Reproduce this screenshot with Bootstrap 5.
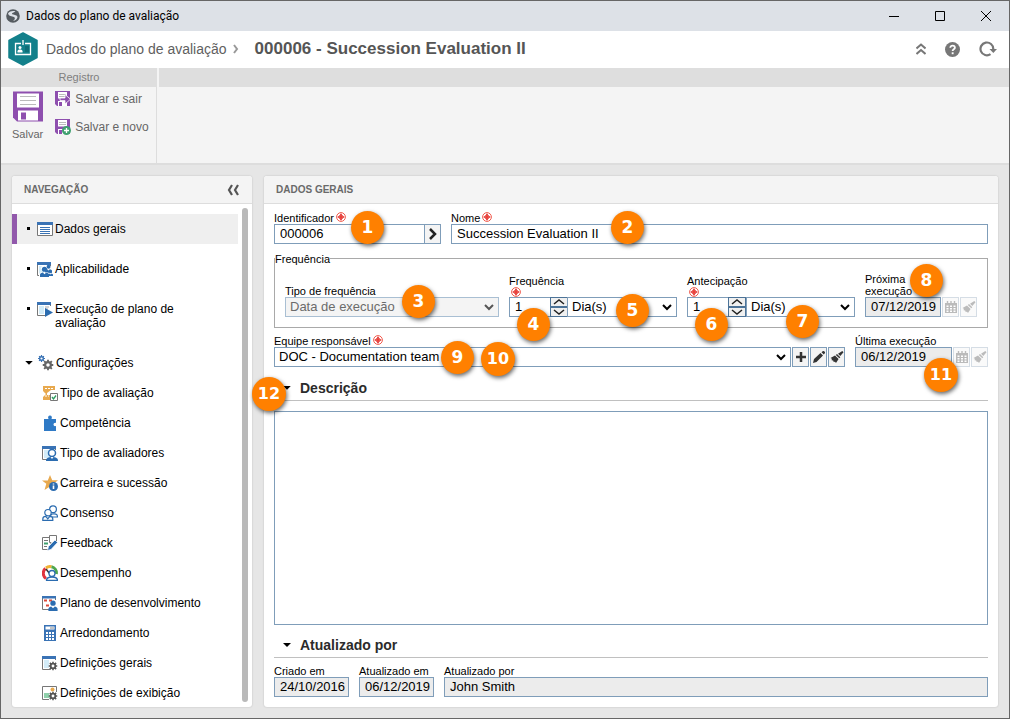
<!DOCTYPE html>
<html lang="pt-BR">
<head>
<meta charset="utf-8">
<meta name="viewport" content="width=device-width, initial-scale=1">
<title>Dados do plano de avaliação</title>
<link href="https://cdn.jsdelivr.net/npm/bootstrap@5.3.0/dist/css/bootstrap.min.css" rel="stylesheet">
<style>
  :root { --field: #7f9db9; --muted: #666; --line: #ddd; }
  body { font: 12px/14px "Liberation Sans", Arial, sans-serif; color: #000; background: #e6e6e6; }
  svg { display: block; flex: none; }
  .window { border: 1px solid #666; min-height: 700px; }
  .plain-btn { border: 0; background: none; padding: 0; color: inherit; font: inherit; }
  a { color: inherit; text-decoration: none; }

  .titlebar { height: 30px; background: #dde1e7; font: 12px/16px Roboto, "Open Sans", sans-serif; padding-left: 5px; gap: 6px; }
  .titlebar .plain-btn { width: 46px; height: 30px; margin-left: -6px; }
  .crumbs { height: 37px; background: #fff; padding: 0 12px 0 7px; color: #5f5f5f; font-size: 14px; }
  .crumbs h1 { font-size: 17px; line-height: 20px; font-weight: 700; margin: 0; color: #555; }
  .crumb-tools { gap: 19px; }

  .ribbon-heads { height: 19px; background: #dedede; color: #808080; font-size: 11px; line-height: 19px; }
  .ribbon-heads div { width: 158px; border-right: 2px solid #f4f4f4; }
  .ribbon-body { height: 78px; background: #f4f4f4; border-bottom: 2px solid var(--line); color: var(--muted); }
  .ribbon-group { width: 156px; border-right: 1px solid var(--line); padding: 4px 0 0 11px; }
  .ribbon-group .plain-btn { line-height: 16px; }
  .save-big { font-size: 11px; }

  .workspace { padding: 11px; gap: 12px; }
  .panel { background: #fff; border-radius: 3px; box-shadow: 0 0 2px rgba(0,0,0,.2); }
  .panel-head { height: 28px; background: #f4f4f4; border-bottom: 1px solid var(--line); border-radius: 3px 3px 0 0; padding: 2px 12px 0; color: #6a6a6a; }
  .panel-head h2 { font-size: 10px; line-height: 12px; font-weight: 700; margin: 0; }
  .sidebar { width: 240px; }
  .menu-scroll { overflow: auto; scrollbar-width: none; padding: 10px 2px 0 0; }
  .menu-scroll::-webkit-scrollbar { display: none; }
  .menu-item { display: flex; min-height: 30px; padding: 7px 0 7px 14px; margin-bottom: 10px; gap: 2px; line-height: 14px; }
  .menu-item span { padding-top: 1px; }
  .menu-item::before { content: ""; flex: none; width: 3px; height: 3px; background: #000; margin: 6px 5px 0 1px; }
  .menu-item.current { background: #efefef; box-shadow: inset 5px 0 #9158ab; }
  .menu-item.parent { margin: 11px 0 0; }
  .menu-item.parent::before { width: 8px; height: 4px; margin: 6px 3px 0 -1px; clip-path: polygon(0 0,100% 0,50% 100%); }
  .menu-item.parent, .menu-item.tall { margin-bottom: 0; }
  .submenu .menu-item { margin: 0; padding-left: 30px; }
  .submenu .menu-item::before { display: none; }
  .scroll-track { width: 12px; padding: 4px 4px 5px 2px; }
  .scroll-thumb { background: #b9b9b9; border-radius: 3px; }

  .form-area { padding: 8px 10px 10px; }
  .form-area label, .form-area legend { font-size: 11px; line-height: 12px; height: 12px; white-space: nowrap; }
  .field { position: relative; display: flex; flex-direction: column; min-width: 0; }
  .field label { display: flex; gap: 2px; }
  .field label.stacked { flex-direction: column; height: auto; gap: 0; }
  .field label.stacked svg { margin-left: 2px; }
  .field label.two-line { height: 24px; white-space: normal; width: 60px; display: block; }
  .controls { display: flex; height: 20px; }
  .controls.spaced { gap: 1px; }
  .controls .form-control, .controls .form-select, textarea.form-control {
    font-size: 13px; line-height: 18px; border: 1px solid var(--field); border-radius: 0; color: #000; min-height: 0; min-width: 0;
  }
  .controls .form-control { padding: 0 0 0 5px; height: 20px; }
  .controls .form-control[readonly] { background: #ececec; }
  .controls .form-select {
    padding: 0 20px 0 4px; height: 20px; background-position: right 4px center; background-size: 10px 8px;
    background-image: url("data:image/svg+xml,%3Csvg xmlns='http://www.w3.org/2000/svg' viewBox='0 0 10 8'%3E%3Cpath d='M1 2l4 4 4-4' fill='none' stroke='%23000' stroke-width='2'/%3E%3C/svg%3E");
  }
  .controls .form-select:disabled { background-color: #f4f4f4; color: #6b6b6b; border-color: #a9bfd3; opacity: 1;
    background-image: url("data:image/svg+xml,%3Csvg xmlns='http://www.w3.org/2000/svg' viewBox='0 0 10 8'%3E%3Cpath d='M1 2l4 4 4-4' fill='none' stroke='%23555' stroke-width='2'/%3E%3C/svg%3E"); }
  .tool-btn { width: 17px; height: 20px; flex: none; padding: 0; border: 1px solid var(--field); background: #f4f4f4; color: #333; display: flex; align-items: center; justify-content: center; }
  .tool-btn:disabled { border-color: #d5dde5; color: #bbb; background: #fafafa; }
  .spinner { width: 18px; flex: none; display: flex; flex-direction: column; }
  .spinner button { height: 10px; padding: 0; border: 1px solid #4c7398; background: #f0f0f0; display: flex; align-items: center; justify-content: center; }
  .joined { margin-left: -1px; }
  .qty { flex: 0 0 42px; }
  .freq-box { border: 1px solid #a9a9a9; padding: 8px 10px 10px; margin-top: 9px; }
  .freq-box legend { float: none; width: auto; margin: 0 0 0 -10px; padding: 0; }
  .freq-cols { gap: 10px; align-items: flex-end; }
  .below { margin-top: 7px; }
  .id-cell { width: 167px; }
  .grow-wide { flex: 214 1 0; }
  .grow-mid { flex: 168 1 0; }
  .date-cell { width: 112px; }
  .date-cell-wide { width: 133px; }
  .w-stamp { width: 75px; }
  .fold { position: relative; display: flex; align-items: center; height: 25px; border-bottom: 1px solid #c0c0c0; padding-left: 9px; gap: 9px; margin-top: 9px; }
  textarea + .fold { margin-top: 8px; }
  .fold h3 { font-size: 14px; line-height: 16px; font-weight: 700; margin: 0; color: #2b2b2b; }
  .fold .plain-btn { width: 8px; height: 4px; background: #000; clip-path: polygon(0 0,100% 0,50% 100%); }
  textarea.form-control { margin-top: 10px; min-height: 60px; resize: none; }

  .pin { position: absolute; z-index: 2; width: 33px; height: 33px; margin: -1px 0 0 -1px; border-radius: 50%; background: #ff8000; color: #fff; text-align: center;
    font: bold 17px/33px "DejaVu Sans", Verdana, sans-serif; box-shadow: 1px 2px 4px rgba(0,0,0,.6); }
  .pin-10, .pin-11, .pin-12 { font-size: 16px; width: 34px; height: 34px; line-height: 34px; }
  .pin-1 { left: 78px; top: 0; }      .pin-2 { left: 161px; top: 0; }
  .pin-3 { left: 118px; top: 1px; }   .pin-4, .pin-6 { left: 9px; top: 34px; }
  .pin-5 { left: 108px; top: 20px; }  .pin-7 { left: 100px; top: 31px; }
  .pin-8 { left: 46px; top: -8px; }   .pin-9 { left: 168px; top: 7px; }
  .pin-10 { left: 208px; top: 8px; }  .pin-11 { left: 70px; top: 24px; }
  .pin-12 { left: -21px; top: 2px; }
</style>
</head>
<body>
<svg width="0" height="0" class="position-absolute" aria-hidden="true">
  <defs>
    <symbol id="req" viewBox="0 0 10 10"><circle cx="5" cy="5" r="4.400" fill="#fff" stroke="#ee4a3a" stroke-width=".9"/><path d="M5 1.800v6.400M1.800 5h6.400" stroke="#e02020" stroke-width="1.600"/><path d="M3 3l4 4M7 3L3 7" stroke="#ee4a3a" stroke-width=".8"/></symbol>
    <symbol id="cal" viewBox="0 0 14 14"><path d="M1 3h12v10H1z" fill="currentColor"/><path d="M3.500 1v3M10.500 1v3M7 1v3" stroke="currentColor" stroke-width="1.400"/><path d="M2.500 5.500h2v1.500h-2zM6 5.500h2v1.500H6zM9.500 5.500h2v1.500h-2zM2.500 8h2v1.500h-2zM6 8h2v1.500H6zM9.500 8h2v1.500h-2zM2.500 10.500h2V12h-2zM6 10.500h2V12H6zM9.500 10.500h2V12h-2z" fill="#fff"/></symbol>
    <symbol id="brush" viewBox="0 0 14 14"><path d="M12.300 1l1.200 1.200-3.200 3.700L8 3.800zM7 4l3.300 3.200-1 1.100L5.800 5zM5 5.600l3.600 3.500-2.600 3.900-1-1.300-1.300.3-.5-1.500-1.600-.2.300-1.500L.5 8z" fill="currentColor"/></symbol>
    <symbol id="floppy" viewBox="0 0 30 30"><path d="M0 0h30v30H4l-4-4z" fill="#8e4fae"/><path d="M4 2h22v14H4zM5 19h20v10H5z" fill="#fff"/><path d="M7 5h16M7 9h16M7 13h16" stroke="#bbb"/><path d="M8 21h5v7H8z" fill="#8e4fae"/></symbol>
    <symbol id="win" viewBox="0 0 16 16"><path d="M.5 2v12.500h8M13.500 5V2" fill="none" stroke="#777"/><path d="M2 5h5v8H2z" fill="#d3ecf8"/><path d="M0 1h14v3H0z" fill="#3a73b5"/></symbol>
    <symbol id="gear" viewBox="0 0 10 10"><path d="M5 0v10M0 5h10M1.500 1.500l7 7M8.500 1.500l-7 7" stroke="currentColor" stroke-width="1.700"/><circle cx="5" cy="5" r="2.600" fill="#fff" stroke="currentColor" stroke-width="2"/></symbol>
    <symbol id="person" viewBox="0 0 10 12"><circle cx="5" cy="3.500" r="2.900" fill="currentColor"/><path d="M0 12V9.500C0 8 2 7.200 3 7l2 2 2-2c1 .2 3 1 3 2.500V12z" fill="currentColor"/></symbol>
  </defs>
</svg>

<div class="window vh-100 d-flex flex-column">
  <div class="titlebar d-flex align-items-center">
    <svg width="14" height="14" viewBox="0 0 14 14"><circle cx="7" cy="7" r="6.800" fill="#555b60"/><path d="M2 4.500C4 2 7 1.500 9.500 2.500L6 4.300c0 1.700 2.500 1.200 4.500 2.200 2.500 1.500-.5 5.500-3.500 5.500 2-1.500 2.500-3 1-4C6 7 3 7.500 2 4.500z" fill="#dde1e7"/></svg>
    <span class="me-auto">Dados do plano de avaliação</span>
    <button type="button" class="plain-btn" aria-label="Minimizar"><svg class="mx-auto" width="10" height="10" stroke="#000"><path d="M0 5.500h10"/></svg></button>
    <button type="button" class="plain-btn" aria-label="Maximizar"><svg class="mx-auto" width="10" height="10" fill="none" stroke="#000"><path d="M.5.5h9v9h-9z"/></svg></button>
    <button type="button" class="plain-btn" aria-label="Fechar"><svg class="mx-auto" width="10" height="10" stroke="#000"><path d="M0 0l10 10M10 0L0 10"/></svg></button>
  </div>

  <header class="crumbs d-flex align-items-center">
    <svg width="30" height="34" viewBox="0 0 30 34"><path d="M15 1l14 7.500v17L15 33 1 25.500v-17z" fill="#13808b" stroke="#13808b" stroke-width="1.500" stroke-linejoin="round"/><path d="M13 11.500H7.500v11h15v-11H17M15 8v5" fill="none" stroke="#fff" stroke-width="1.300"/><circle cx="12" cy="15.500" r="1.500" fill="#fff"/><path d="M9.500 20.500v-1.200c0-1 1-1.700 2.500-1.700s2.500.7 2.500 1.700v1.200z" fill="#fff"/><path d="M17 15h4M17 17h4M17 19h4" stroke="#0b5a63"/></svg>
    <a href="#" class="ms-2">Dados do plano de avaliação</a>
    <svg class="ms-1 me-3" width="8" height="10" viewBox="0 0 8 10"><path d="M3 1l3 4-3 4" fill="none" stroke="#999" stroke-width="2"/></svg>
    <h1 class="me-auto">000006 - Succession Evaluation II</h1>
    <div class="crumb-tools d-flex align-items-center">
      <button type="button" class="plain-btn" aria-label="Recolher"><svg width="10" height="12" viewBox="0 0 10 12" fill="none" stroke="#777" stroke-width="2"><path d="M.5 5.500L5 1.500l4.500 4M.5 11L5 7l4.500 4"/></svg></button>
      <button type="button" class="plain-btn" aria-label="Ajuda"><svg width="15" height="15" viewBox="0 0 15 15"><circle cx="7.500" cy="7.500" r="7.500" fill="#777"/><path d="M5.300 5.800c0-3 4.600-2.800 4.600 0 0 1.600-2.300 1.500-2.300 3.200" fill="none" stroke="#fff" stroke-width="1.800"/><path d="M6.700 10.300h1.900v1.900H6.700z" fill="#fff"/></svg></button>
      <button type="button" class="plain-btn" aria-label="Atualizar"><svg width="18" height="16" viewBox="0 0 18 16"><path d="M11.500 13.200A6.400 6.400 0 1 1 14.300 8" fill="none" stroke="#777" stroke-width="2.200"/><path d="M10.500 8H18l-3.700 4z" fill="#777"/></svg></button>
    </div>
  </header>

  <div class="ribbon-heads text-center"><div>Registro</div></div>
  <div class="ribbon-body d-flex">
    <div class="ribbon-group d-flex align-items-start">
      <button type="button" class="plain-btn save-big"><svg class="mx-auto mb-1" width="30" height="31"><use href="#floppy"/></svg>Salvar</button>
      <div class="d-flex flex-column align-items-start gap-2 ms-2 ps-1">
        <button type="button" class="plain-btn d-flex gap-1 mb-1"><svg width="16" height="16" viewBox="0 0 16 16"><path d="M0 0h15v15H2l-2-2z" fill="#8e4fae"/><path d="M3 1h9v6.500H3zM3 10h9v5H3z" fill="#fff"/><path d="M4 3.500h7M4 5.500h7" stroke="#bbb"/><path d="M4 11h3v4H4z" fill="#8e4fae"/><path d="M5 7h5V3.500l5.500 4.700L10 13V9.500H5z" fill="#8e4fae" stroke="#fff" stroke-width=".8"/></svg>Salvar e sair</button>
        <button type="button" class="plain-btn d-flex gap-1"><svg width="16" height="16" viewBox="0 0 16 16"><path d="M0 0h15v15H2l-2-2z" fill="#8e4fae"/><path d="M3 1h9v6.500H3zM3 10h9v5H3z" fill="#fff"/><path d="M4 3.500h7M4 5.500h7" stroke="#bbb"/><path d="M4 11h3v4H4z" fill="#8e4fae"/><circle cx="11.500" cy="11.500" r="4.500" fill="#3fa06f"/><path d="M11.500 9v5M9 11.500h5" stroke="#fff" stroke-width="1.300"/></svg>Salvar e novo</button>
      </div>
    </div>
  </div>

  <main class="workspace d-flex flex-fill overflow-hidden">
    <aside class="panel sidebar d-flex flex-column flex-shrink-0">
      <div class="panel-head d-flex align-items-center justify-content-between">
        <h2>NAVEGAÇÃO</h2>
        <button type="button" class="plain-btn" aria-label="Recolher navegação"><svg width="14" height="12" viewBox="0 0 14 12" fill="none" stroke="#555" stroke-width="2.200"><path d="M6 1L3 6l3 5M12 1L9 6l3 5"/></svg></button>
      </div>
      <div class="d-flex flex-fill overflow-hidden">
        <nav class="menu-scroll flex-fill">
          <ul class="list-unstyled mb-0">
            <li><a href="#" class="menu-item current"><svg width="16" height="16"><path d="M.5 2v12.500h15V2" fill="#fff" stroke="#777"/><path d="M0 1h16v3H0z" fill="#3a73b5"/><path d="M3 6.500h10M3 8.500h10M3 10.500h10M3 12.500h10" stroke="#3a73b5"/></svg><span>Dados gerais</span></a></li>
            <li><a href="#" class="menu-item"><svg width="16" height="16" color="#2b6cb0"><use href="#win"/><use href="#person" x="8" y="3" width="7" height="9"/><use href="#person" x="2" y="4" width="10" height="12" color="#fff"/><use href="#person" x="3" y="5" width="9" height="11"/><use href="#person" x="11" y="9" width="5" height="6"/></svg><span>Aplicabilidade</span></a></li>
            <li><a href="#" class="menu-item tall"><svg width="16" height="16"><use href="#win"/><path d="M8 6h4M8 8h3" stroke="#aaa"/><path d="M8 7l8 4.500L8 16z" fill="#2b6cb0"/></svg><span>Execução de plano de<br>avaliação</span></a></li>
            <li><a href="#" class="menu-item parent"><svg width="16" height="16"><use href="#gear" width="7" height="7" color="#3a73b5"/><use href="#gear" x="4.500" y="4.500" width="11" height="11" color="#666"/></svg><span>Configurações</span></a>
              <ul class="list-unstyled submenu">
                <li><a href="#" class="menu-item"><svg width="16" height="16"><path d="M1 1h12v4H9L5 8v2h3v5H1v-3l3-3-3-3z" fill="#e8a94e"/><path d="M3 3.500h8M3 11h4" stroke="#fff" stroke-dasharray="2 1"/><path d="M8.500 8.500h7v7h-7z" fill="#fff" stroke="#777"/><path d="M10 12l1.500 2L14 10.500" fill="none" stroke="#2e9e62" stroke-width="1.300"/></svg><span>Tipo de avaliação</span></a></li>
                <li><a href="#" class="menu-item"><svg width="16" height="16"><path d="M2 4h4.500C5.500 2 6.500.5 8 .5S10.500 2 9.500 4H14v4c-3-1-3.500 4 0 3v5H2z" fill="#2f7ac6"/></svg><span>Competência</span></a></li>
                <li><a href="#" class="menu-item"><svg width="16" height="16"><use href="#win"/><path d="M3 6h5v7H3z" fill="#d3ecf8"/><path d="M4 16c0-3 2-4 6-4s6 1 6 4z" fill="#2b6cb0"/><circle cx="10" cy="8" r="3.500" fill="#fff" stroke="#2b6cb0" stroke-width="1.500"/><path d="M8.500 12L10 14l1.500-2" fill="#fff"/></svg><span>Tipo de avaliadores</span></a></li>
                <li><a href="#" class="menu-item"><svg width="16" height="16"><path d="M8 0l2.200 5.200H16l-4.500 3.500L13 15l-5-3.500L2.500 15l1.800-6.300L0 5.500h5.800z" fill="#e8a94e"/><circle cx="11.500" cy="11.500" r="4.500" fill="#2b6cb0"/><path d="M11.500 10.500V14M11.500 8.500v1" stroke="#fff" stroke-width="1.600"/></svg><span>Carreira e sucessão</span></a></li>
                <li><a href="#" class="menu-item"><svg width="16" height="16" fill="#fff" stroke="#2b6cb0" stroke-width="1.200"><path d="M8 11l2-2c3-.5 5.400 0 5.400 2v1H9"/><circle cx="11" cy="4.200" r="3.400"/><path d="M.8 15.400V14c0-2 2-2.700 3-2.700l2 2.500 2-2.500c1.500 0 3 .7 3 2.700v1.400z"/><circle cx="6" cy="7.700" r="3.200"/></svg><span>Consenso</span></a></li>
                <li><a href="#" class="menu-item"><svg width="16" height="16" fill="none" stroke="#777"><path d="M7 2.500H.5v12h6M7.500.5h7v7h-3L9 9V7.500H7.500z" fill="#fff"/><path d="M2 5.500h4M2 11.500h3" stroke="#777"/><path d="M2 8.500h4" stroke="#3fa06f" stroke-width="2"/><path d="M5.500 15.500l1-4L13 5l2.500 2.500L9 14.500z" fill="#2b6cb0" stroke="#fff" stroke-width=".7"/></svg><span>Feedback</span></a></li>
                <li><a href="#" class="menu-item"><svg width="16" height="16" fill="none" stroke-width="3"><path d="M4 13.500A6.300 6.300 0 0 1 3.500 3.500" stroke="#e0333c"/><path d="M4 3a6.300 6.300 0 0 1 5.500-1.200" stroke="#f2b233"/><path d="M9.500 1.800A6.300 6.300 0 0 1 14.300 9" stroke="#4ea64e"/><path d="M4 4l4 5" stroke="#333" stroke-width="1.500"/><g fill="#fff" stroke="#2b6cb0" stroke-width="1.300"><path d="M4.500 15.500c0-3 2-3.500 5.500-3.500s5.500.5 5.500 3.500z"/><circle cx="10" cy="8.500" r="3"/></g></svg><span>Desempenho</span></a></li>
                <li><a href="#" class="menu-item"><svg width="16" height="16" color="#2b6cb0"><path d="M.5 2v12.500h7M13.500 5V2" fill="none" stroke="#777"/><path d="M0 1h14v2.500H0z" fill="#3a73b5"/><path d="M2 5.500h3M7 5.500h3M4 10.500h3" stroke="#dd4b39" stroke-width="2"/><use href="#person" x="6" y="5" width="10" height="11"/></svg><span>Plano de desenvolvimento</span></a></li>
                <li><a href="#" class="menu-item"><svg width="16" height="16"><path d="M2 0h12v16H2z" fill="#3a73b5"/><path d="M3.500 1.500h9v3h-9zM4 7h2v2H4zM7 7h2v2H7zM10 7h2v2h-2zM4 10h2v2H4zM7 10h2v2H7zM10 10h2v2h-2zM4 13h2v2H4zM7 13h2v2H7zM10 13h2v2h-2z" fill="#fff"/><path d="M8 3h4" stroke="#888"/></svg><span>Arredondamento</span></a></li>
                <li><a href="#" class="menu-item"><svg width="16" height="16"><use href="#win"/><use href="#gear" x="6.500" y="6.500" width="9" height="9" color="#555"/></svg><span>Definições gerais</span></a></li>
                <li><a href="#" class="menu-item"><svg width="16" height="16"><path d="M7 14.500H.5V1.500h14V7" fill="#fff" stroke="#777"/><circle cx="10.500" cy="4.500" r="2" fill="#e8a94e"/><path d="M2 8h5l1 5H2z" fill="#8fd0ab"/><use href="#gear" x="6.500" y="6.500" width="9" height="9" color="#555"/></svg><span>Definições de exibição</span></a></li>
              </ul>
            </li>
          </ul>
        </nav>
        <div class="scroll-track d-flex"><div class="scroll-thumb flex-fill"></div></div>
      </div>
    </aside>

    <section class="panel d-flex flex-column flex-fill">
      <div class="panel-head d-flex align-items-center"><h2>DADOS GERAIS</h2></div>
      <form class="form-area d-flex flex-column flex-fill">
        <div class="d-flex freq-cols">
          <div class="field id-cell">
            <label for="ident">Identificador <svg width="10" height="10"><use href="#req"/></svg></label>
            <div class="controls">
              <input id="ident" class="form-control" value="000006">
              <button type="button" class="tool-btn joined" aria-label="Gerar identificador"><svg width="10" height="12" fill="none" stroke="#222" stroke-width="2.500"><path d="M2 1l5 5-5 5"/></svg></button>
            </div>
            <span class="pin pin-1">1</span>
          </div>
          <div class="field flex-fill">
            <label for="nome">Nome <svg width="10" height="10"><use href="#req"/></svg></label>
            <div class="controls"><input id="nome" class="form-control" value="Succession Evaluation II"></div>
            <span class="pin pin-2">2</span>
          </div>
        </div>

        <fieldset class="freq-box">
          <legend>Frequência</legend>
          <div class="d-flex freq-cols">
            <div class="field grow-wide">
              <label for="tipo">Tipo de frequência</label>
              <div class="controls"><select id="tipo" class="form-select" disabled><option>Data de execução</option></select></div>
              <span class="pin pin-3">3</span>
            </div>
            <div class="field grow-mid">
              <label for="freq" class="stacked">Frequência<svg width="10" height="10"><use href="#req"/></svg></label>
              <div class="controls">
                <input id="freq" class="form-control qty" value="1">
                <div class="spinner joined">
                  <button type="button" aria-label="Aumentar"><svg width="12" height="6" fill="none" stroke="#222" stroke-width="1.500"><path d="M1 5l5-4 5 4"/></svg></button>
                  <button type="button" aria-label="Diminuir"><svg width="12" height="6" fill="none" stroke="#222" stroke-width="1.500"><path d="M1 1l5 4 5-4"/></svg></button>
                </div>
                <select class="form-select joined" aria-label="Unidade da frequência"><option>Dia(s)</option></select>
              </div>
              <span class="pin pin-4">4</span><span class="pin pin-5">5</span>
            </div>
            <div class="field grow-mid">
              <label for="antec" class="stacked">Antecipação<svg width="10" height="10"><use href="#req"/></svg></label>
              <div class="controls">
                <input id="antec" class="form-control qty" value="1">
                <div class="spinner joined">
                  <button type="button" aria-label="Aumentar"><svg width="12" height="6" fill="none" stroke="#222" stroke-width="1.500"><path d="M1 5l5-4 5 4"/></svg></button>
                  <button type="button" aria-label="Diminuir"><svg width="12" height="6" fill="none" stroke="#222" stroke-width="1.500"><path d="M1 1l5 4 5-4"/></svg></button>
                </div>
                <select class="form-select" aria-label="Unidade da antecipação"><option>Dia(s)</option></select>
              </div>
              <span class="pin pin-6">6</span><span class="pin pin-7">7</span>
            </div>
            <div class="field date-cell">
              <label for="prox" class="two-line">Próxima execução</label>
              <div class="controls spaced">
                <input id="prox" class="form-control" value="07/12/2019" readonly>
                <button type="button" class="tool-btn" disabled aria-label="Calendário"><svg width="14" height="14"><use href="#cal"/></svg></button>
                <button type="button" class="tool-btn" disabled aria-label="Limpar"><svg width="14" height="14"><use href="#brush"/></svg></button>
              </div>
              <span class="pin pin-8">8</span>
            </div>
          </div>
        </fieldset>

        <div class="d-flex freq-cols below">
          <div class="field flex-fill">
            <label for="equipe">Equipe responsável <svg width="10" height="10"><use href="#req"/></svg></label>
            <div class="controls spaced">
              <select id="equipe" class="form-select"><option>DOC - Documentation team</option></select>
              <button type="button" class="tool-btn" aria-label="Adicionar"><svg width="10" height="10" stroke="currentColor" stroke-width="2.500"><path d="M5 0v10M0 5h10"/></svg></button>
              <button type="button" class="tool-btn" aria-label="Editar"><svg width="14" height="14" fill="currentColor"><path d="M1 13l1-4 6.500-6L11 5.500l-6.500 6.500zM9.500 2.200L11 1c1-.5 2.500 1 2 2l-1.200 1.500z"/></svg></button>
              <button type="button" class="tool-btn" aria-label="Limpar equipe"><svg width="14" height="14"><use href="#brush"/></svg></button>
            </div>
            <span class="pin pin-9">9</span><span class="pin pin-10">10</span>
          </div>
          <div class="field date-cell-wide">
            <label for="ultima">Última execução</label>
            <div class="controls spaced">
              <input id="ultima" class="form-control" value="06/12/2019" readonly>
              <button type="button" class="tool-btn" disabled aria-label="Calendário"><svg width="14" height="14"><use href="#cal"/></svg></button>
              <button type="button" class="tool-btn" disabled aria-label="Limpar"><svg width="14" height="14"><use href="#brush"/></svg></button>
            </div>
            <span class="pin pin-11">11</span>
          </div>
        </div>

        <div class="fold"><button type="button" class="plain-btn" aria-label="Recolher descrição"></button><h3>Descrição</h3><span class="pin pin-12">12</span></div>
        <textarea class="form-control flex-fill" aria-label="Descrição"></textarea>

        <div class="fold"><button type="button" class="plain-btn" aria-label="Recolher atualização"></button><h3>Atualizado por</h3></div>
        <div class="d-flex freq-cols below">
          <div class="field w-stamp"><label for="criado">Criado em</label><div class="controls"><input id="criado" class="form-control" value="24/10/2016" readonly></div></div>
          <div class="field w-stamp"><label for="atual">Atualizado em</label><div class="controls"><input id="atual" class="form-control" value="06/12/2019" readonly></div></div>
          <div class="field flex-fill"><label for="por">Atualizado por</label><div class="controls"><input id="por" class="form-control" value="John Smith" readonly></div></div>
        </div>
      </form>
    </section>
  </main>
</div>
<script src="https://cdn.jsdelivr.net/npm/bootstrap@5.3.0/dist/js/bootstrap.bundle.min.js"></script>
</body>
</html>
